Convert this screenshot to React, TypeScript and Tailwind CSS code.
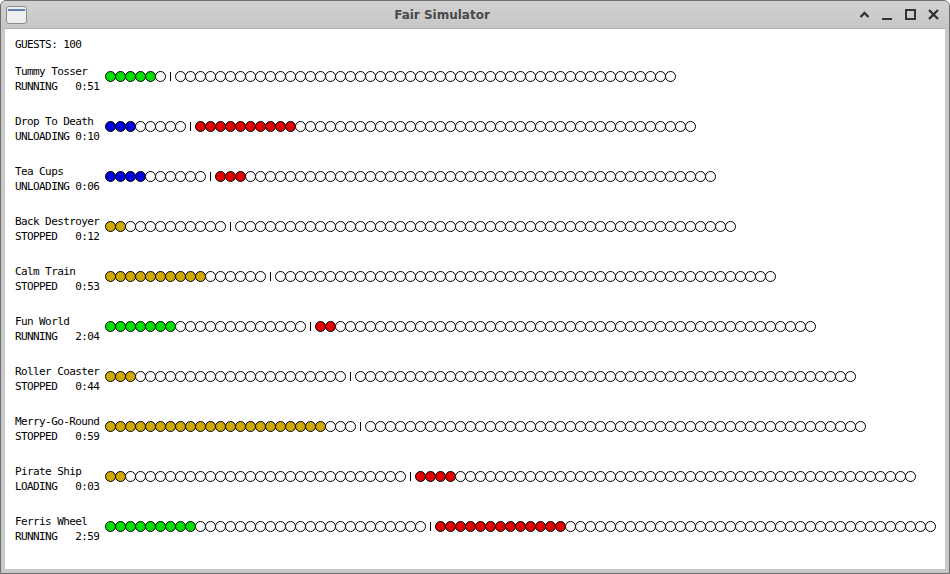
import React from 'react';

type Ride = {
  name: string;
  status: string;
  time: string;
  color: string;
  riding: number;
  queue: number;
  done: number;
};

const rides: Ride[] = [
  { name: 'Tummy Tosser', status: 'RUNNING', time: '0:51', color: 'bg-[#00e000]', riding: 5, queue: 6, done: 0 },
  { name: 'Drop To Death', status: 'UNLOADING', time: '0:10', color: 'bg-[#0000dc]', riding: 3, queue: 8, done: 10 },
  { name: 'Tea Cups', status: 'UNLOADING', time: '0:06', color: 'bg-[#0000dc]', riding: 4, queue: 10, done: 3 },
  { name: 'Back Destroyer', status: 'STOPPED', time: '0:12', color: 'bg-[#cfa800]', riding: 2, queue: 12, done: 0 },
  { name: 'Calm Train', status: 'STOPPED', time: '0:53', color: 'bg-[#cfa800]', riding: 10, queue: 16, done: 0 },
  { name: 'Fun World', status: 'RUNNING', time: '2:04', color: 'bg-[#00e000]', riding: 7, queue: 20, done: 2 },
  { name: 'Roller Coaster', status: 'STOPPED', time: '0:44', color: 'bg-[#cfa800]', riding: 3, queue: 24, done: 0 },
  { name: 'Merry-Go-Round', status: 'STOPPED', time: '0:59', color: 'bg-[#cfa800]', riding: 22, queue: 25, done: 0 },
  { name: 'Pirate Ship', status: 'LOADING', time: '0:03', color: 'bg-[#cfa800]', riding: 2, queue: 30, done: 4 },
  { name: 'Ferris Wheel', status: 'RUNNING', time: '2:59', color: 'bg-[#00e000]', riding: 9, queue: 32, done: 13 },
];

const Dot = ({ fill }: { fill: string }) => (
  <div className={`w-[11px] h-[11px] shrink-0 rounded-full border border-black -mr-px ${fill}`} />
);

const RideRow = ({ ride }: { ride: Ride }) => {
  const before = Array.from({ length: ride.queue }, (_, i) => (i < ride.riding ? ride.color : 'bg-white'));
  const after = Array.from({ length: 50 }, (_, i) => (i < ride.done ? 'bg-[#e00000]' : 'bg-white'));
  return (
    <div className="flex h-[30px]">
      <div className="w-[90px] shrink-0 whitespace-pre leading-[15px]">
        <div>{ride.name}</div>
        <div>{ride.status.padEnd(10, ' ') + ride.time}</div>
      </div>
      <div className="flex items-center h-[11px] mt-[7px]">
        {before.map((c, i) => (
          <Dot key={'b' + i} fill={c} />
        ))}
        <div className="flex w-[10px] shrink-0 pl-[5px] items-center h-[11px]">
          <div className="w-px h-[9px] bg-black" />
        </div>
        {after.map((c, i) => (
          <Dot key={'a' + i} fill={c} />
        ))}
      </div>
    </div>
  );
};

const App = () => {
  return (
    <div className="w-[950px] h-[574px] bg-white overflow-hidden">
      <div className="w-full h-full flex flex-col bg-[#c8c8c8] border border-[#6e6e6e] rounded-t-[6px] overflow-hidden">
        {/* title bar */}
        <div className="h-[27px] shrink-0 flex items-center px-[5px] bg-gradient-to-b from-[#d2d2d2] to-[#c6c6c6]">
          <div className="w-[21px] h-[18px] rounded-[3px] border border-[#8a8a8a] bg-[#efefef] overflow-hidden">
            <div className="h-[2px] mt-[2px] mx-[1px] bg-[#5a7fb8]" />
          </div>
          <div className="flex-1 text-center text-[12px] font-bold text-[#4a4a4a] font-['DejaVu_Sans',sans-serif]">
            Fair Simulator
          </div>
          <div className="flex items-center gap-[8px] pr-[3px]">
            <svg width="15" height="15" viewBox="0 0 15 15">
              <path d="M3.5 10 L7.5 6 L11.5 10" stroke="#333" strokeWidth="2.4" fill="none" />
            </svg>
            <svg width="15" height="15" viewBox="0 0 15 15">
              <rect x="2" y="11" width="10" height="2" fill="#333" />
            </svg>
            <svg width="15" height="15" viewBox="0 0 15 15">
              <rect x="3" y="3" width="9" height="9" stroke="#333" strokeWidth="2" fill="none" />
            </svg>
            <svg width="15" height="15" viewBox="0 0 15 15">
              <path d="M3 3 L12 12 M12 3 L3 12" stroke="#333" strokeWidth="2.4" fill="none" />
            </svg>
          </div>
        </div>
        {/* content */}
        <div className="flex-1 mx-[4px] mb-[4px] bg-white border-t border-[#b0b0b0] pt-[8px] pl-[10px] text-[11px] tracking-[-0.6px] text-black font-['DejaVu_Sans_Mono',monospace]">
          <div className="leading-[15px] whitespace-pre">GUESTS: 100</div>
          <div className="flex flex-col gap-[20px] mt-[12px]">
            {rides.map((r) => (
              <RideRow key={r.name} ride={r} />
            ))}
          </div>
        </div>
      </div>
    </div>
  );
};

export default App;
